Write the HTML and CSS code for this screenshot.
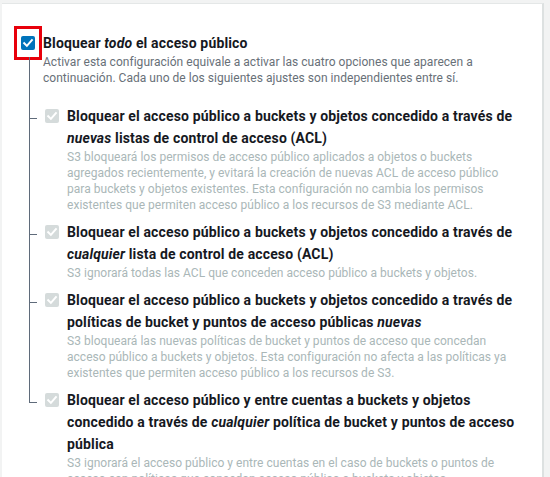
FILE: index.html
```html
<!DOCTYPE html>
<html lang="es">
<head>
<meta charset="utf-8">
<title>Bloquear acceso público</title>
<link rel="stylesheet" href="styles.css">
</head>
<body>
<div class="frame">
  <div class="panel">
    <div class="option top">
      <span class="highlight"></span>
      <span class="cb cb-on"><svg viewBox="0 0 14 14" width="14" height="14"><path d="M3.2 7.2 L5.9 9.9 L10.9 4.2" /></svg></span>
      <div class="text">
        <div class="title">Bloquear <i>todo</i> el acceso público</div>
        <div class="desc">Activar esta configuración equivale a activar las cuatro opciones que aparecen a continuación. Cada uno de los siguientes ajustes son independientes entre sí.</div>
      </div>
    </div>
    <ul class="children">
      <li class="option child">
        <span class="cb cb-off"><svg viewBox="0 0 14 14" width="14" height="14"><path d="M3.2 7.2 L5.9 9.9 L10.9 4.2" /></svg></span>
        <div class="text">
          <div class="title">Bloquear el acceso público a buckets y objetos concedido a través de <i>nuevas</i> listas de control de acceso (ACL)</div>
          <div class="desc">S3 bloqueará los permisos de acceso público aplicados a objetos o buckets agregados recientemente, y evitará la creación de nuevas ACL de acceso público para buckets y objetos existentes. Esta configuración no cambia los permisos existentes que permiten acceso público a los recursos de S3 mediante ACL.</div>
        </div>
      </li>
      <li class="option child">
        <span class="cb cb-off"><svg viewBox="0 0 14 14" width="14" height="14"><path d="M3.2 7.2 L5.9 9.9 L10.9 4.2" /></svg></span>
        <div class="text">
          <div class="title">Bloquear el acceso público a buckets y objetos concedido a través de <i>cualquier</i> lista de control de acceso (ACL)</div>
          <div class="desc">S3 ignorará todas las ACL que conceden acceso público a buckets y objetos.</div>
        </div>
      </li>
      <li class="option child">
        <span class="cb cb-off"><svg viewBox="0 0 14 14" width="14" height="14"><path d="M3.2 7.2 L5.9 9.9 L10.9 4.2" /></svg></span>
        <div class="text">
          <div class="title">Bloquear el acceso público a buckets y objetos concedido a través de políticas de bucket y puntos de acceso públicas <i>nuevas</i></div>
          <div class="desc">S3 bloqueará las nuevas políticas de bucket y puntos de acceso que concedan acceso público a buckets y objetos. Esta configuración no afecta a las políticas ya existentes que permiten acceso público a los recursos de S3.</div>
        </div>
      </li>
      <li class="option child">
        <span class="cb cb-off"><svg viewBox="0 0 14 14" width="14" height="14"><path d="M3.2 7.2 L5.9 9.9 L10.9 4.2" /></svg></span>
        <div class="text">
          <div class="title">Bloquear el acceso público y entre cuentas a buckets y objetos concedido a través de <i>cualquier</i> política de bucket y puntos de acceso pública</div>
          <div class="desc">S3 ignorará el acceso público y entre cuentas en el caso de buckets o puntos de acceso con políticas que concedan acceso público a buckets y objetos.</div>
        </div>
      </li>
    </ul>
  </div>
</div>
</body>
</html>
```

FILE: styles.css
```css
html, body {
  margin: 0;
  padding: 0;
}

body {
  background: #f2f3f3;
  font-family: Roboto, "Liberation Sans", sans-serif;
  color: #16191f;
  height: 477px;
  overflow: hidden;
}

.frame {
  padding: 3px 6px 0 2px;
}

.panel {
  background: #ffffff;
  border-top: 1px solid #e4e7e7;
  border-right: 2px solid #dde1e1;
  padding: 28px 20px 40px 19px;
}

.option {
  display: flex;
  gap: 8px;
  position: relative;
}

.cb {
  flex: none;
  width: 14px;
  height: 14px;
  margin-top: 4px;
  border-radius: 2px;
  display: flex;
}

.cb svg path {
  fill: none;
  stroke: #ffffff;
  stroke-width: 2;
  stroke-linecap: square;
  stroke-linejoin: miter;
}

.cb-on {
  background: #0073bb;
}

.cb-off {
  background: #d5dbdb;
}

.title {
  font-size: 14px;
  font-weight: 700;
  line-height: 22px;
  letter-spacing: 0.15px;
  color: #16191f;
}

.desc {
  font-size: 12px;
  line-height: 16px;
  letter-spacing: 0.03px;
  color: #687078;
}

.child .desc {
  color: #aab7b8;
}

.highlight {
  position: absolute;
  left: -7px;
  top: -6px;
  width: 28px;
  height: 34px;
  box-sizing: border-box;
  border: 3px solid #e8000b;
}

.children {
  list-style: none;
  margin: 19px 0 0;
  padding: 0 0 0 24px;
}

.child {
  margin-bottom: 8px;
}

.child::before {
  content: "";
  position: absolute;
  left: -16px;
  top: -8px;
  height: calc(100% + 8px);
  border-left: 1px solid #5f6b7a;
}

.child:first-child::before {
  top: -48px;
  height: calc(100% + 48px);
}

.child:last-child::before {
  height: 22px;
}

.child::after {
  content: "";
  position: absolute;
  left: -16px;
  top: 13px;
  width: 8px;
  border-top: 1px solid #5f6b7a;
}
```
